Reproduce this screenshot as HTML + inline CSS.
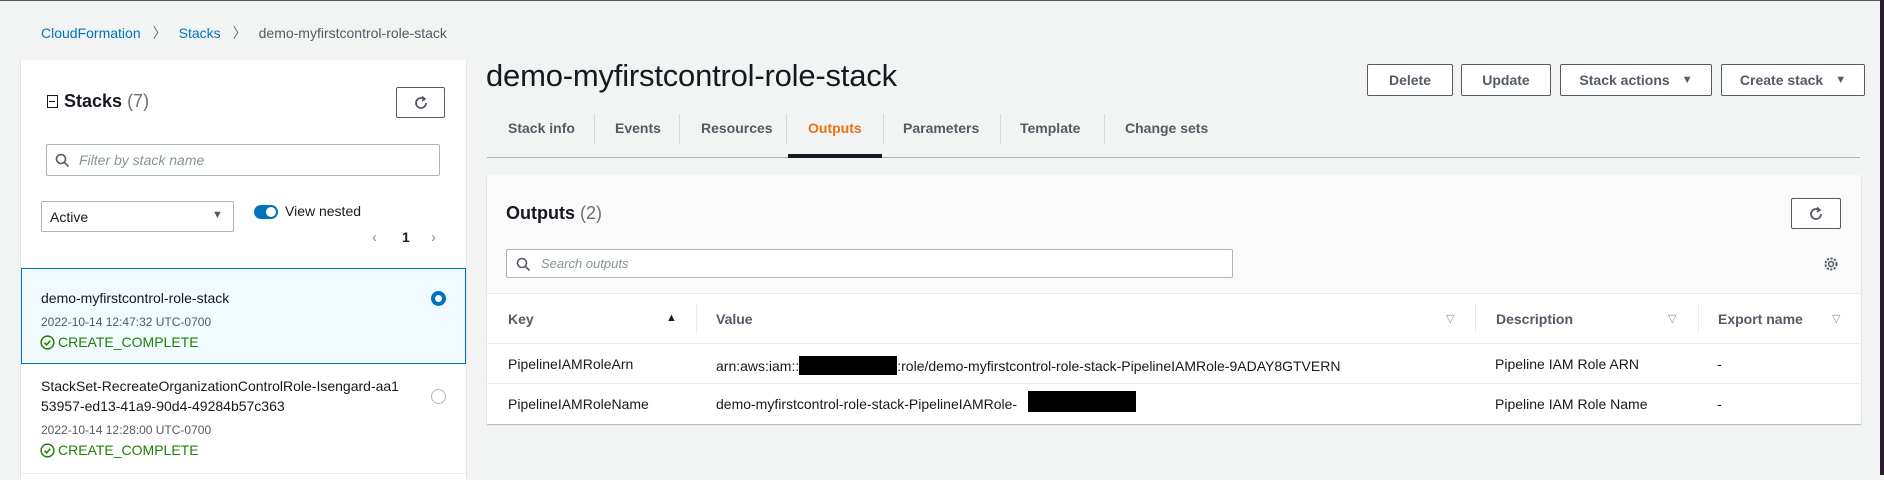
<!DOCTYPE html>
<html><head><meta charset="utf-8"><style>
*{box-sizing:border-box;margin:0;padding:0}
body{width:1884px;height:475px;overflow:hidden;background:#f2f3f3;font-family:"Liberation Sans",sans-serif;color:#16191f;font-size:14px;position:relative}
.a{position:absolute;white-space:nowrap}
.btn{position:absolute;border:1px solid #545b64;background:#fff;color:#545b64;font-weight:bold;font-size:14px;display:flex;align-items:center;justify-content:center;border-radius:2px}
.input{position:absolute;border:1px solid #aab7b8;background:#fff;border-radius:2px}
.ph{font-style:italic;color:#879596;font-size:14px}
.tab{position:absolute;top:120px;font-weight:bold;color:#545b64;font-size:14px}
.sep{position:absolute;top:114px;width:1px;height:30px;background:#d5dbdb}
.hsep{position:absolute;top:304px;width:1px;height:30px;background:#eaeded}
.ok{color:#1d8102;font-size:14px}
.ok svg{vertical-align:-3px;margin-right:3px}
</style></head><body>
<div class="a" style="left:0;top:0;width:1884px;height:1px;background:#545b64"></div>
<div class="a" style="left:1880px;top:0;width:4px;height:475px;background:#2a1a2e"></div>

<div class="a" style="left:41px;top:23px;font-size:14px"><span style="color:#0073bb">CloudFormation</span><span style="color:#687078;margin:0 12px">&#x232A;</span><span style="color:#0073bb">Stacks</span><span style="color:#687078;margin:0 12px">&#x232A;</span><span style="color:#545b64">demo-myfirstcontrol-role-stack</span></div>

<div class="a" style="left:21px;top:60px;width:445px;height:420px;background:#fff;box-shadow:0 1px 1px rgba(0,28,36,.3)"></div>
<div class="a" style="left:47px;top:91px;font-size:18px"><span style="display:inline-block;width:11px;height:13px;border:1.5px solid #16191f;position:relative;top:1px;margin-right:6px"><span style="position:absolute;left:1px;top:4.5px;width:6px;height:1.5px;background:#16191f"></span></span><b>Stacks</b> <span style="color:#687078">(7)</span></div>
<div class="btn" style="left:396px;top:87px;width:49px;height:31px"><svg width="16" height="16" viewBox="0 0 16 16"><path d="M13 8a5 5 0 1 1-2-4" fill="none" stroke="#545b64" stroke-width="1.8"/><path d="M9 1.5l3 2.5-3 2" fill="none" stroke="#545b64" stroke-width="1.6"/></svg></div>
<div class="input" style="left:46px;top:144px;width:394px;height:32px"><svg class="a" style="left:8px;top:8px" width="15" height="15" viewBox="0 0 15 15"><circle cx="6" cy="6" r="4.5" fill="none" stroke="#545b64" stroke-width="1.6"/><path d="M9.5 9.5l4 4" stroke="#545b64" stroke-width="1.6"/></svg><span class="a ph" style="left:32px;top:7px">Filter by stack name</span></div>
<div class="input" style="left:41px;top:201px;width:193px;height:31px;border-color:#aab7b8"><span class="a" style="left:8px;top:7px">Active</span><span class="a" style="left:170px;top:7px;font-size:11px;color:#545b64">&#9660;</span></div>
<div class="a" style="left:254px;top:205px;width:24px;height:14px;border-radius:7px;background:#0073bb"><div class="a" style="left:12px;top:2px;width:10px;height:10px;border-radius:50%;background:#fff"></div></div>
<div class="a" style="left:285px;top:203px">View nested</div>
<div class="a" style="left:372px;top:229px;color:#879596;font-size:15px">&#x2039;</div>
<div class="a" style="left:402px;top:229px;font-weight:bold">1</div>
<div class="a" style="left:431px;top:229px;color:#879596;font-size:15px">&#x203A;</div>

<div class="a" style="left:21px;top:268px;width:445px;height:96px;background:#f1faff;border:1px solid #0073bb"></div>
<div class="a" style="left:41px;top:290px">demo-myfirstcontrol-role-stack</div>
<div class="a" style="left:41px;top:315px;font-size:12px;color:#545b64">2022-10-14 12:47:32 UTC-0700</div>
<div class="a ok" style="left:40px;top:334px"><svg width="15" height="15" viewBox="0 0 16 16"><circle cx="8" cy="8" r="6.8" fill="none" stroke="#1d8102" stroke-width="1.6"/><path d="M4.8 8.2l2.2 2.3 4-4.5" fill="none" stroke="#1d8102" stroke-width="1.6"/></svg>CREATE_COMPLETE</div>
<div class="a" style="left:431px;top:291px;width:15px;height:15px;border-radius:50%;border:4px solid #0073bb;background:#fff"></div>

<div class="a" style="left:41px;top:378px">StackSet-RecreateOrganizationControlRole-Isengard-aa1</div>
<div class="a" style="left:41px;top:398px">53957-ed13-41a9-90d4-49284b57c363</div>
<div class="a" style="left:41px;top:423px;font-size:12px;color:#545b64">2022-10-14 12:28:00 UTC-0700</div>
<div class="a ok" style="left:40px;top:442px"><svg width="15" height="15" viewBox="0 0 16 16"><circle cx="8" cy="8" r="6.8" fill="none" stroke="#1d8102" stroke-width="1.6"/><path d="M4.8 8.2l2.2 2.3 4-4.5" fill="none" stroke="#1d8102" stroke-width="1.6"/></svg>CREATE_COMPLETE</div>
<div class="a" style="left:431px;top:389px;width:15px;height:15px;border-radius:50%;border:1px solid #aab7b8;background:#fff"></div>
<div class="a" style="left:21px;top:473px;width:445px;height:1px;background:#eaeded"></div>

<div class="a" style="left:486px;top:58px;font-size:31px;letter-spacing:-.2px">demo-myfirstcontrol-role-stack</div>
<div class="btn" style="left:1367px;top:64px;width:86px;height:32px">Delete</div>
<div class="btn" style="left:1461px;top:64px;width:90px;height:32px">Update</div>
<div class="btn" style="left:1560px;top:64px;width:152px;height:32px">Stack actions <span style="font-size:11px;margin-left:12px">&#9660;</span></div>
<div class="btn" style="left:1721px;top:64px;width:144px;height:32px">Create stack <span style="font-size:11px;margin-left:12px">&#9660;</span></div>

<div class="tab" style="left:508px">Stack info</div>
<div class="sep" style="left:594px"></div>
<div class="tab" style="left:615px">Events</div>
<div class="sep" style="left:679px"></div>
<div class="tab" style="left:701px">Resources</div>
<div class="sep" style="left:786px"></div>
<div class="tab" style="left:808px;color:#ec7211">Outputs</div>
<div class="sep" style="left:883px"></div>
<div class="tab" style="left:903px">Parameters</div>
<div class="sep" style="left:1000px"></div>
<div class="tab" style="left:1020px">Template</div>
<div class="sep" style="left:1104px"></div>
<div class="tab" style="left:1125px">Change sets</div>
<div class="a" style="left:487px;top:157px;width:1373px;height:1px;background:#aab7b8"></div>
<div class="a" style="left:788px;top:154px;width:94px;height:4px;background:#16191f"></div>

<div class="a" style="left:487px;top:175px;width:1374px;height:249px;background:#fff;box-shadow:0 1px 1px rgba(0,28,36,.3)"></div>
<div class="a" style="left:487px;top:175px;width:1374px;height:119px;background:#fafafa;border-bottom:1px solid #eaeded"></div>
<div class="a" style="left:506px;top:203px;font-size:18px"><b>Outputs</b> <span style="color:#687078">(2)</span></div>
<div class="btn" style="left:1791px;top:198px;width:50px;height:31px"><svg width="16" height="16" viewBox="0 0 16 16"><path d="M13 8a5 5 0 1 1-2-4" fill="none" stroke="#545b64" stroke-width="1.8"/><path d="M9 1.5l3 2.5-3 2" fill="none" stroke="#545b64" stroke-width="1.6"/></svg></div>
<div class="input" style="left:506px;top:249px;width:727px;height:29px"><svg class="a" style="left:9px;top:7px" width="15" height="15" viewBox="0 0 15 15"><circle cx="6" cy="6" r="4.5" fill="none" stroke="#545b64" stroke-width="1.6"/><path d="M9.5 9.5l4 4" stroke="#545b64" stroke-width="1.6"/></svg><span class="a ph" style="left:34px;top:6px;font-size:13px">Search outputs</span></div>
<svg class="a" style="left:1823px;top:256px" width="16" height="16" viewBox="0 0 16 16"><circle cx="8" cy="8" r="2.5" fill="none" stroke="#545b64" stroke-width="1.5"/><circle cx="8" cy="8" r="5.5" fill="none" stroke="#545b64" stroke-width="2" stroke-dasharray="2.2 1.4"/></svg>

<div class="a" style="left:508px;top:311px;font-weight:bold;color:#545b64">Key</div>
<div class="a" style="left:666px;top:312px;font-size:11px">&#9650;</div>
<div class="hsep" style="left:696px"></div>
<div class="a" style="left:716px;top:311px;font-weight:bold;color:#545b64">Value</div>
<div class="a" style="left:1446px;top:312px;font-size:11px;color:#879596">&#9661;</div>
<div class="hsep" style="left:1475px"></div>
<div class="a" style="left:1496px;top:311px;font-weight:bold;color:#545b64">Description</div>
<div class="a" style="left:1668px;top:312px;font-size:11px;color:#879596">&#9661;</div>
<div class="hsep" style="left:1698px"></div>
<div class="a" style="left:1718px;top:311px;font-weight:bold;color:#545b64">Export name</div>
<div class="a" style="left:1832px;top:312px;font-size:11px;color:#879596">&#9661;</div>
<div class="a" style="left:487px;top:343px;width:1374px;height:1px;background:#eaeded"></div>
<div class="a" style="left:487px;top:383px;width:1374px;height:1px;background:#eaeded"></div>

<div class="a" style="left:508px;top:356px">PipelineIAMRoleArn</div>
<div class="a" style="left:716px;top:356px">arn:aws:iam::<span style="display:inline-block;width:98px;height:19px;background:#000;vertical-align:-4px"></span>:role/demo-myfirstcontrol-role-stack-PipelineIAMRole-9ADAY8GTVERN</div>
<div class="a" style="left:1495px;top:356px">Pipeline IAM Role ARN</div>
<div class="a" style="left:1717px;top:356px">-</div>

<div class="a" style="left:508px;top:396px">PipelineIAMRoleName</div>
<div class="a" style="left:716px;top:396px">demo-myfirstcontrol-role-stack-PipelineIAMRole-</div>
<div class="a" style="left:1028px;top:391px;width:108px;height:21px;background:#000"></div>
<div class="a" style="left:1495px;top:396px">Pipeline IAM Role Name</div>
<div class="a" style="left:1717px;top:396px">-</div>
</body></html>
